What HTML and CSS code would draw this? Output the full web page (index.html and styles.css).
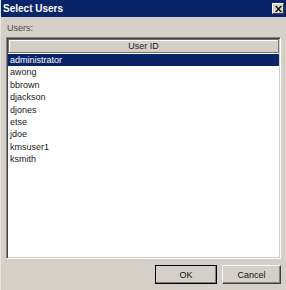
FILE: index.html
```html
<!DOCTYPE html>
<html>
<head>
<meta charset="utf-8">
<link rel="stylesheet" href="styles.css">
</head>
<body>
<div class="window">
  <div class="titlebar">
    <span class="title">Select Users</span>
    <span class="close">
      <svg width="7" height="6" viewBox="0 0 7 6"><path d="M0 0h1.6l1.9 2 1.9-2H7L4.4 3 7 6H5.4L3.5 4 1.6 6H0l2.6-3z" fill="#000"/></svg>
    </span>
  </div>
  <div class="content">
    <div class="label">Users:</div>
    <div class="listbox">
      <div class="header">User ID</div>
      <div class="rows">
        <div class="row selected">administrator</div>
        <div class="row">awong</div>
        <div class="row">bbrown</div>
        <div class="row">djackson</div>
        <div class="row">djones</div>
        <div class="row">etse</div>
        <div class="row">jdoe</div>
        <div class="row">kmsuser1</div>
        <div class="row">ksmith</div>
      </div>
    </div>
    <div class="footer">
      <button class="btn ok">OK</button>
      <button class="btn">Cancel</button>
    </div>
  </div>
</div>
</body>
</html>
```
FILE: styles.css
```css
html, body {
  margin: 0;
  padding: 0;
}
body {
  width: 286px;
  height: 290px;
  overflow: hidden;
  background: #d4d0c8;
  font-family: "Liberation Sans", Arial, sans-serif;
}
.window {
  width: 286px;
  height: 290px;
  display: flex;
  flex-direction: column;
  box-sizing: border-box;
  background: #d4d0c8;
  border-left: 1px solid #e8e6e0;
}
.titlebar {
  height: 17px;
  background: #0a246a;
  display: flex;
  align-items: center;
  justify-content: space-between;
  padding: 0 2px 0 2px;
  flex: none;
}
.title {
  color: #fff;
  font-weight: bold;
  font-size: 10px;
}
.close {
  width: 12px;
  height: 11px;
  box-sizing: border-box;
  background: #d4d0c8;
  border-top: 1px solid #fff;
  border-left: 1px solid #fff;
  border-right: 1px solid #404040;
  border-bottom: 1px solid #404040;
  display: flex;
  align-items: center;
  justify-content: center;
}
.content {
  flex: 1;
  display: flex;
  flex-direction: column;
  padding: 5px 5px 0 5px;
}
.label {
  font-size: 9px;
  color: #4a4a4a;
  height: 15px;
  line-height: 12px;
  padding-left: 1px;
}
.listbox {
  height: 222px;
  box-sizing: border-box;
  background: #fff;
  border-top: 1px solid #808080;
  border-left: 1px solid #808080;
  border-right: 1px solid #fff;
  border-bottom: 1px solid #fff;
  box-shadow: inset 1px 1px 0 #404040, inset -1px -1px 0 #d4d0c8;
  padding: 1px;
  display: flex;
  flex-direction: column;
}
.header {
  height: 14px;
  box-sizing: border-box;
  background: #d4d0c8;
  border: 1px solid #707070;
  box-shadow: inset 1px 1px 0 #fff;
  font-size: 9px;
  color: #222;
  text-align: center;
  line-height: 12px;
  flex: none;
}
.rows {
  padding-top: 1px;
}
.row {
  height: 12.4px;
  line-height: 12.4px;
  font-size: 9px;
  color: #1a1a1a;
  padding-left: 2px;
  white-space: nowrap;
}
.row.selected {
  background: #0a246a;
  color: #fff;
}
.footer {
  display: flex;
  justify-content: flex-end;
  gap: 5px;
  padding-top: 6px;
}
.btn {
  width: 62px;
  height: 19px;
  box-sizing: border-box;
  margin: 0;
  padding: 0;
  background: #d4d0c8;
  font-family: "Liberation Sans", Arial, sans-serif;
  font-size: 9px;
  color: #111;
  border-top: 1px solid #fff;
  border-left: 1px solid #fff;
  border-right: 1px solid #404040;
  border-bottom: 1px solid #404040;
  box-shadow: inset -1px -1px 0 #808080;
}
.btn.ok {
  outline: 1px solid #000;
  outline-offset: -1px;
}
.btn + .btn {
  width: 59px;
}
```
